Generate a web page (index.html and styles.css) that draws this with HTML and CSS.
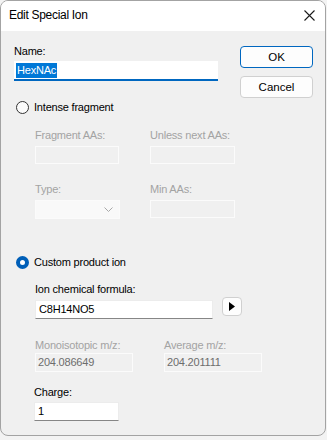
FILE: index.html
```html
<!DOCTYPE html>
<html lang="en">
<head>
  <meta charset="UTF-8">
  <meta name="viewport" content="width=device-width, initial-scale=1.0">
  <title>Edit Special Ion</title>
  <link rel="stylesheet" href="styles.css">
</head>
<body>
  <div class="window">
    <div class="titlebar">
      <span class="title">Edit Special Ion</span>
      <svg class="close" width="11" height="11" viewBox="0 0 11 11">
        <path d="M0.5 0.5 L10.5 10.5 M10.5 0.5 L0.5 10.5" stroke="#1a1a1a" stroke-width="1.1" fill="none"/>
      </svg>
    </div>

    <div class="content">
      <div class="top-row">
        <div class="name-field">
          <div class="label">Name:</div>
          <div class="input name-input"><span class="selected">HexNAc</span></div>
        </div>
        <div class="buttons">
          <button class="btn default">OK</button>
          <button class="btn">Cancel</button>
        </div>
      </div>

      <div class="radio-row">
        <span class="radio"></span>
        <span>Intense fragment</span>
      </div>

      <div class="pair frag">
        <div class="field">
          <div class="label disabled">Fragment AAs:</div>
          <div class="input off w84"></div>
        </div>
        <div class="field">
          <div class="label disabled">Unless next AAs:</div>
          <div class="input off w85"></div>
        </div>
      </div>

      <div class="pair type">
        <div class="field">
          <div class="label disabled">Type:</div>
          <div class="input off combo w85">
            <svg width="9" height="5" viewBox="0 0 9 5"><path d="M0.5 0.5 L4.5 4.5 L8.5 0.5" stroke="#a8a8a8" fill="none"/></svg>
          </div>
        </div>
        <div class="field">
          <div class="label disabled">Min AAs:</div>
          <div class="input off w85"></div>
        </div>
      </div>

      <div class="radio-row custom">
        <span class="radio checked"></span>
        <span>Custom product ion</span>
      </div>

      <div class="sub formula">
        <div class="label">Ion chemical formula:</div>
        <div class="formula-row">
          <div class="input edit w178">C8H14NO5</div>
          <button class="arrow-btn">
            <svg width="6" height="9" viewBox="0 0 6 9"><path d="M0 0 L6 4.5 L0 9 Z" fill="#000"/></svg>
          </button>
        </div>
      </div>

      <div class="pair mass">
        <div class="field">
          <div class="label disabled">Monoisotopic m/z:</div>
          <div class="input off value w98">204.086649</div>
        </div>
        <div class="field">
          <div class="label disabled">Average m/z:</div>
          <div class="input off value w98">204.201111</div>
        </div>
      </div>

      <div class="charge">
        <div class="label">Charge:</div>
        <div class="input edit w85">1</div>
      </div>
    </div>
  </div>

  <div class="behind">
    <span class="check"></span>
    <span>Auto-select all matching transitions</span>
  </div>
</body>
</html>
```

FILE: styles.css
```css
body {
  margin: 0;
  background: #f3f3f3;
  font-family: "Liberation Sans", Arial, sans-serif;
  font-size: 11px;
  line-height: 13px;
  color: #000;
  width: 327px;
  height: 440px;
  overflow: hidden;
}
.window {
  width: 324px;
  height: 434px;
  border: 1px solid #a3a3a3;
  border-radius: 8px;
  background: #f0f0f0;
  overflow: hidden;
}
.titlebar {
  height: 30px;
  background: #fff;
  display: flex;
  align-items: center;
  justify-content: space-between;
  padding: 0 10px 0 8px;
}
.title {
  font-size: 12px;
  letter-spacing: -0.3px;
  margin-top: -1px;
}
.close {
  margin-top: -1px;
}
.content {
  padding: 14px 0 0 13px;
  letter-spacing: -0.2px;
}
.top-row {
  display: flex;
  align-items: flex-start;
}
.label {
  height: 13px;
  margin-bottom: 4px;
}
.disabled {
  color: #a3a3a3;
}
.input {
  box-sizing: border-box;
  height: 18px;
  padding: 2px 3px 0;
}
.name-field .label {
  margin-bottom: 3px;
}
.name-input {
  width: 204px;
  height: 20px;
  background: #fff;
  border-bottom: 2px solid #0067c0;
  padding: 2px 2px 0;
}
.selected {
  background: #0078d7;
  color: #fff;
  display: inline-block;
  padding: 1px;
  line-height: 13px;
}
.buttons {
  display: flex;
  flex-direction: column;
  gap: 8px;
  margin: 1px 0 0 22px;
}
.btn {
  width: 73px;
  height: 22px;
  border: 1px solid #d0d0d0;
  border-radius: 4px;
  background: #fdfdfd;
  font-family: "Liberation Sans", Arial, sans-serif;
  font-size: 11.5px;
  color: #000;
  padding: 0;
}
.btn.default {
  border-color: #0067c0;
}
.radio-row {
  display: flex;
  align-items: center;
  gap: 5px;
  height: 16px;
  margin: 1px 0 0 2px;
}
.radio {
  box-sizing: border-box;
  width: 13px;
  height: 13px;
  border: 1px solid #333;
  border-radius: 50%;
  background: #fbfbfb;
}
.radio.checked {
  border: 4px solid #005fb8;
  background: #fff;
}
.pair {
  display: flex;
  margin-left: 21px;
}
.field {
  display: flex;
  flex-direction: column;
}
.frag {
  margin-top: 14px;
  gap: 31px;
}
.type {
  margin-top: 19px;
  gap: 30px;
}
.off {
  background: #f0f0f0;
  border: 1px solid #fbfbfb;
}
.w84 { width: 84px; }
.w85 { width: 85px; }
.w98 { width: 98px; }
.w178 { width: 178px; }
.combo {
  height: 19px;
  background: #f9f9f9;
  display: flex;
  align-items: center;
  justify-content: flex-end;
  padding: 0 6px 0 0;
}
.custom {
  margin-top: 35px;
}
.sub {
  margin-left: 21px;
}
.formula {
  margin-top: 13px;
}
.formula-row {
  display: flex;
  align-items: flex-start;
  gap: 9px;
}
.edit {
  background: #fff;
  border: 1px solid #ececec;
  border-bottom-color: #868686;
  height: 19px;
}
.arrow-btn {
  width: 20px;
  height: 19px;
  margin-top: -3px;
  border: 1px solid #d0d0d0;
  border-radius: 4px;
  background: #fdfdfd;
  padding: 0;
  display: flex;
  align-items: center;
  justify-content: center;
}
.mass {
  margin-top: 20px;
  gap: 31px;
}
.mass .label {
  margin-bottom: 1px;
}
.value {
  color: #6d6d6d;
  height: 19px;
  padding-left: 2px;
}
.charge {
  margin: 14px 0 0 20px;
}
.charge .label {
  margin-bottom: 3px;
}
.behind {
  display: flex;
  align-items: center;
  gap: 7px;
  margin: 3px 0 0 5px;
  color: #1a1a1a;
}
.check {
  width: 11px;
  height: 11px;
  background: #005fb8;
  border-radius: 2px;
}
```
